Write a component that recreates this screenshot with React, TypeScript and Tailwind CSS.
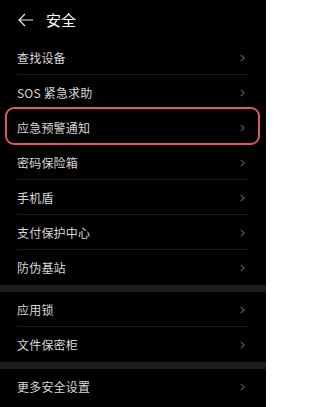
import React from "react";

const groups: string[][] = [
  ["查找设备", "SOS 紧急求助", "应急预警通知", "密码保险箱", "手机盾", "支付保护中心", "防伪基站"],
  ["应用锁", "文件保密柜"],
  ["更多安全设置"],
];

function Chevron() {
  return (
    <svg width="5" height="8" viewBox="0 0 5 8" className="shrink-0">
      <path d="M0.8 0.8 L4.2 4 L0.8 7.2" fill="none" stroke="#5e5e5e" strokeWidth="1.1" />
    </svg>
  );
}

function Row({ label, last, highlight }: { label: string; last: boolean; highlight?: boolean }) {
  return (
    <div className="relative flex h-[35px] items-center pl-[17px] pr-[21px]">
      <div className="flex-1 text-[12px] tracking-[0.2px] text-[#d8d8d8]">{label}</div>
      <Chevron />
      {!last ? <div className="absolute bottom-0 left-[17px] right-[18px] h-px bg-[#1a1a1a]" /> : null}
      {highlight ? (
        <div className="absolute -top-[3px] bottom-0 left-[5px] right-[6px] rounded-[9px] border-2 border-[#e0575c]" />
      ) : null}
    </div>
  );
}

export default function App() {
  return (
    <div
      className="h-[407px] w-[266px] overflow-hidden bg-black"
      style={{ fontFamily: '"Noto Sans CJK SC", "Noto Sans", sans-serif' }}
    >
      <div className="flex h-[40px] items-center pl-[18px]">
        <svg width="16" height="14" viewBox="0 0 16 14">
          <path d="M1 7 H15 M7 1 L1 7 L7 13" fill="none" stroke="#e8e8e8" strokeWidth="1.2" />
        </svg>
        <span className="ml-[12px] text-[15px] text-white">安全</span>
      </div>
      {groups.map((g, gi) => (
        <div key={gi}>
          {gi > 0 ? <div className="h-[7px] bg-[#1d1d1d]" /> : null}
          {g.map((label, i) => (
            <Row key={label} label={label} last={i === g.length - 1} highlight={label === "应急预警通知"} />
          ))}
        </div>
      ))}
    </div>
  );
}
